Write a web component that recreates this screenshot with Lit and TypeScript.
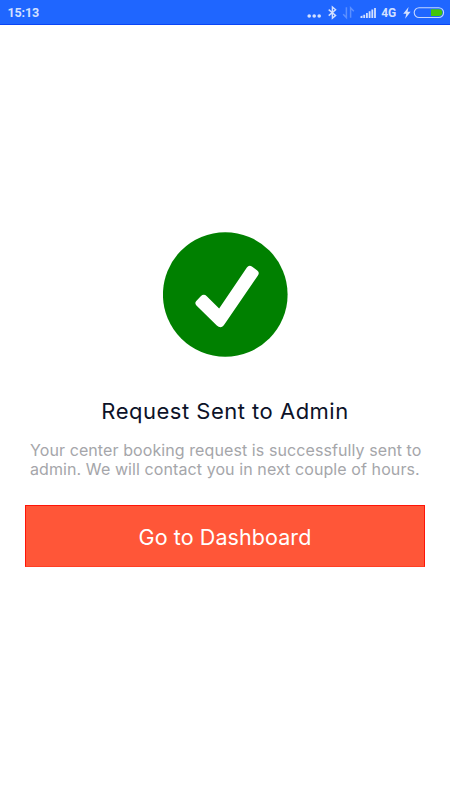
import { LitElement, html, css } from "lit";
import { customElement } from "lit/decorators.js";

@customElement("status-bar")
class StatusBar extends LitElement {
  static styles = css`
    :host {
      display: flex;
      justify-content: space-between;
      align-items: center;
      box-sizing: border-box;
      height: 25px;
      padding-left: 7.5px;
      background: #1f66ff;
      border-bottom: 1px solid #0b45f5;
      color: #d3e0ff;
      font-family: Roboto, sans-serif;
    }
    .time {
      font-size: 12.5px;
      font-weight: 700;
      line-height: 24px;
      letter-spacing: -0.15px;
      padding-top: 1px;
    }
    .icons {
      display: block;
      width: 150px;
      height: 24px;
    }
    .network {
      font-size: 12px;
      font-weight: 700;
    }
  `;

  render() {
    return html`
      <span class="time">15:13</span>
      <svg class="icons" viewBox="300 0 150 24" fill="#d3e0ff">
        <circle cx="309.2" cy="16" r="1.8" />
        <circle cx="314.2" cy="16" r="1.8" />
        <circle cx="319.2" cy="16" r="1.8" />
        <path
          d="M328.7 9.6 L335.6 15.4 L332.4 18.2 V7 L335.6 9.8 L328.7 15.6"
          fill="none"
          stroke="#d3e0ff"
          stroke-width="1.4"
        />
        <g fill="none" stroke="#5c90ff" stroke-width="1.5">
          <path d="M346.4 7.3 V17.6 L343.2 14.2" />
          <path d="M350.6 17.8 V7.8 L353.8 11.2" />
        </g>
        <path d="M360.5 18 v-1.7 l2 -.8 V18z M363.3 18 v-3.3 h1.8 V18z M366 18 v-5 h1.8 V18z M368.7 18 v-6.7 h1.8 V18z M371.4 18 V9.6 h1.8 V18z M374.1 18 V8 h1.8 V18z" />
        <text class="network" x="381.2" y="17.3">4G</text>
        <path d="M408.6 7 L403.2 13.7 H406.3 L405.1 18.7 L410.6 11.7 H407.5z" />
        <rect x="414.2" y="7.7" width="29.4" height="9.8" rx="4.9" fill="none" stroke="#c4d6ff" stroke-width="1.1" />
        <path d="M431 9.2 h8 a3.4 3.4 0 0 1 0 6.8 h-8z" fill="#43c50a" />
      </svg>
    `;
  }
}

@customElement("app-root")
class AppRoot extends LitElement {
  static styles = css`
    :host {
      display: flex;
      flex-direction: column;
      width: 450px;
      height: 800px;
      background: #fff;
      font-family: Inter, "Liberation Sans", sans-serif;
    }
    main {
      flex: 1;
      display: flex;
      flex-direction: column;
      align-items: center;
      padding: 207px 25px 0;
    }
    .check {
      display: block;
      width: 125px;
      height: 125px;
    }
    h1 {
      margin: 41px 0 0;
      font-size: 22px;
      font-weight: 400;
      line-height: 26px;
      letter-spacing: 0.5px;
      color: #0c1228;
      white-space: nowrap;
    }
    p {
      margin: 17px 0 0;
      width: 390px;
      font-size: 16px;
      line-height: 19px;
      letter-spacing: 0.09px;
      color: #a5a6aa;
      white-space: nowrap;
    }
    button {
      box-sizing: border-box;
      margin: 26px 0 0;
      width: 400px;
      height: 62px;
      padding: 2px 0 0;
      border: 1px solid #ff1408;
      border-bottom-color: #ff4025;
      border-radius: 0;
      background: #ff5638;
      color: #fff;
      font: 400 21.5px/26px Inter, "Liberation Sans", sans-serif;
      letter-spacing: 0.08px;
    }
  `;

  render() {
    return html`
      <status-bar></status-bar>
      <main>
        <svg class="check" viewBox="24 21 374 374">
          <circle cx="210.3" cy="208" r="186.5" fill="#008000" />
          <path
            d="M123 228 L137 213 Q146 205 155 213 L192 250 L275 127 Q281 119 290 124 L306 136 Q314 142 308 151 L206 300 Q197 311 185 301 L124 241 Q118 234 123 228Z"
            fill="#fff"
          />
        </svg>
        <h1>Request Sent to Admin</h1>
        <p>
          Your center booking request is successfully sent to<br />admin. We will contact you in
          next couple of hours.
        </p>
        <button>Go to Dashboard</button>
      </main>
    `;
  }
}
